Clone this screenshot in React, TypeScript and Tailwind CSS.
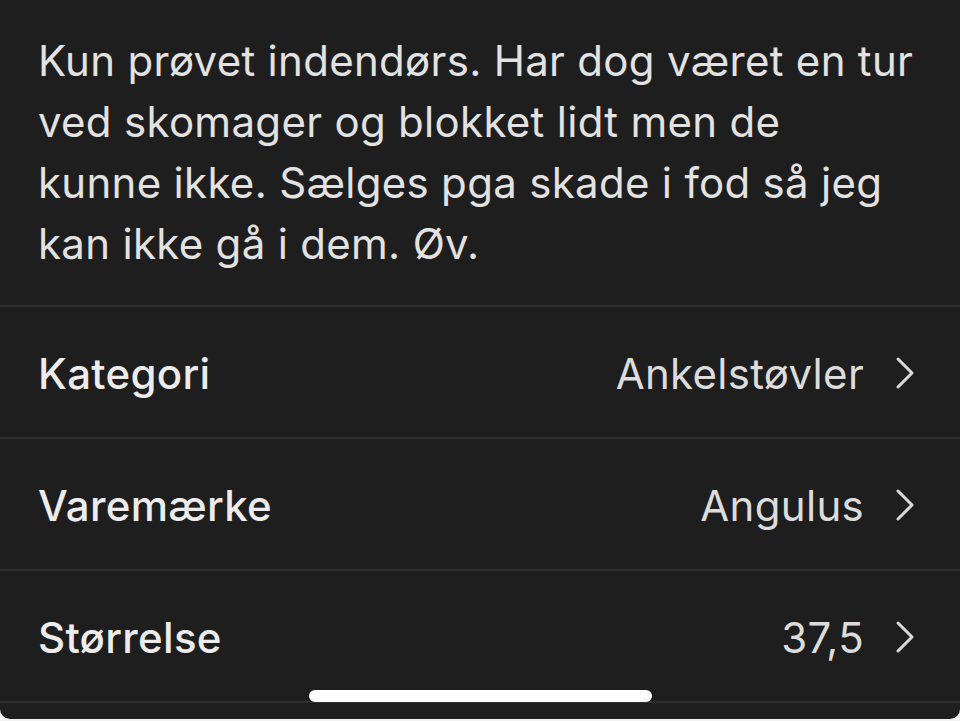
import { ChevronRight } from "lucide-react";

const rows = [
  { label: "Kategori", value: "Ankelstøvler" },
  { label: "Varemærke", value: "Angulus" },
  { label: "Størrelse", value: "37,5" },
];

export default function App() {
  return (
    <div className="h-[721px] w-[960px] overflow-hidden bg-[#f2f2f2] font-['Inter',sans-serif]">
      <div className="relative h-[719px] rounded-b-[10px] bg-[#1e1e1e]">
        <p className="whitespace-nowrap px-[38px] pt-[30px] pb-[31px] text-[42px] leading-[61px] tracking-[0.3px] text-[#e2e2e2]">
          Kun prøvet indendørs. Har dog været en tur
          <br />
          ved skomager og blokket lidt men de
          <br />
          kunne ikke. Sælges pga skade i fod så jeg
          <br />
          kan ikke gå i dem. Øv.
        </p>
        {rows.map((row) => (
          <div
            key={row.label}
            className="flex h-[132px] items-center justify-between border-t-2 border-[#2e2e2e] pl-[38px] pr-[27px] pt-[2px]"
          >
            <span className="text-[42px] font-medium tracking-[0.3px] text-[#ececec]">{row.label}</span>
            <div className="flex items-center gap-[13px]">
              <span className="text-[42px] tracking-[0.3px] text-[#dcdcdc]">{row.value}</span>
              <ChevronRight className="h-[56px] w-[56px] text-[#d8d8d8]" strokeWidth={1.3} />
            </div>
          </div>
        ))}
        <div className="border-t-2 border-[#2e2e2e]" />
        <div className="absolute bottom-[17px] left-[309px] h-[12px] w-[343px] rounded-full bg-white" />
      </div>
    </div>
  );
}
